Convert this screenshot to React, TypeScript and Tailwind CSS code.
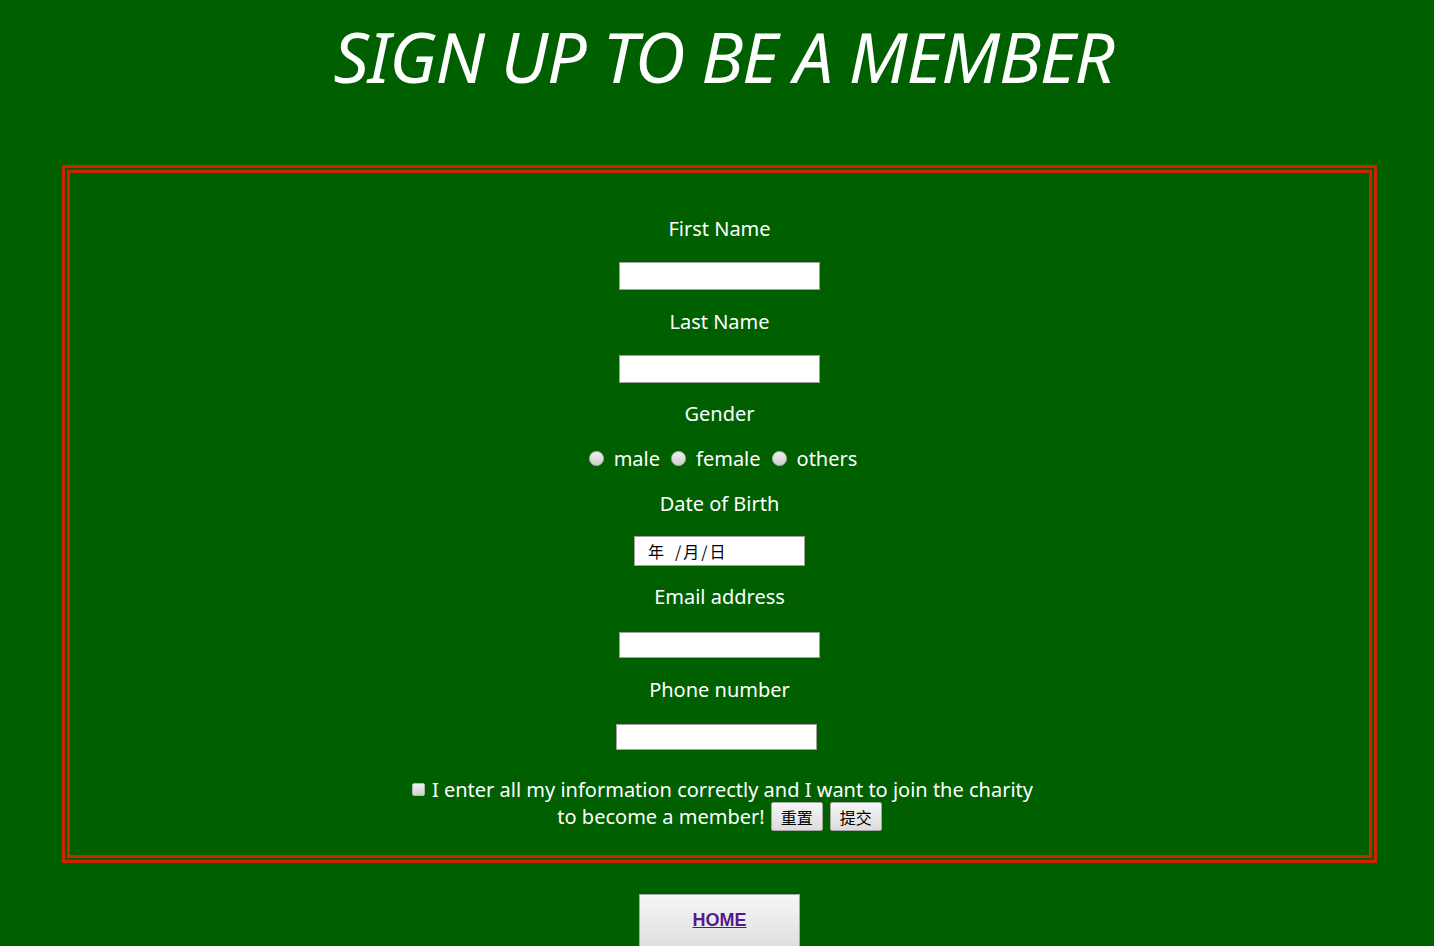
import React from "react";

function Radio({ label }: { label: string }) {
  return (
    <span className="flex items-center">
      <span className="inline-block h-[15px] w-[15px] rounded-full border border-[#bdbdbd] bg-gradient-to-b from-[#eeeeee] to-[#cfcfcf]" />
      <span className="ml-[10px] mr-[11px]">{label}</span>
    </span>
  );
}

function SmallButton({ text }: { text: string }) {
  return (
    <button
      type="button"
      className="flex h-[29px] w-[52px] items-center justify-center rounded-[2px] border border-[#a6a6a6] bg-gradient-to-b from-[#f6f6f6] to-[#dcdcdc] font-['Noto_Sans_CJK_SC',sans-serif] text-[16px] leading-none text-black"
    >
      {text}
    </button>
  );
}

export default function App() {
  return (
    <div className="min-h-screen bg-[#006000] pb-[40px] font-['Noto_Sans',sans-serif] text-white">
      <h1 className="pl-[13px] pt-[21px] text-center text-[70px] leading-[70px] font-normal italic tracking-[-1.2px]">
        SIGN UP TO BE A MEMBER
      </h1>

      <form className="ml-[62px] mt-[74px] flex w-[1315px] flex-col items-center border-[8px] border-double border-[#d02400] pb-[25px] pt-[42px] text-[20px] leading-[27px]">
        <label className="block h-[27px]">First Name</label>
        <input
          type="text"
          className="mt-[20px] h-[28px] w-[201px] border border-[#a0a0a0] bg-white outline-none"
        />

        <label className="mt-[18px] block h-[27px]">Last Name</label>
        <input
          type="text"
          className="mt-[20px] h-[28px] w-[201px] border border-[#a0a0a0] bg-white outline-none"
        />

        <label className="mt-[17px] block h-[27px]">Gender</label>
        <div className="mt-[18px] flex h-[27px] items-center pl-[18px]">
          <Radio label="male" />
          <Radio label="female" />
          <Radio label="others" />
        </div>

        <label className="mt-[18px] block h-[27px]">Date of Birth</label>
        <div className="mt-[19px] flex h-[30px] w-[171px] items-center border border-[#a0a0a0] bg-white pb-[1px] pl-[13px] font-['Noto_Sans_CJK_SC',sans-serif] text-[16px] leading-none text-black">
          <span>年</span>
          <span className="ml-[11px] mr-[2px]">/</span>
          <span>月</span>
          <span className="mx-[2px]">/</span>
          <span>日</span>
        </div>

        <label className="mt-[17px] block h-[27px]">Email address</label>
        <input
          type="email"
          className="mt-[22px] h-[26px] w-[201px] border border-[#a0a0a0] bg-white outline-none"
        />

        <label className="mt-[18px] block h-[27px]">Phone number</label>
        <input
          type="tel"
          className="mr-[6px] mt-[21px] h-[26px] w-[201px] border border-[#a0a0a0] bg-white outline-none"
        />

        <div className="mt-[26px] flex h-[27px] items-center pl-[6px]">
          <span className="inline-block h-[13px] w-[13px] rounded-[2px] border border-[#b5b5b5] bg-gradient-to-b from-[#f0f0f0] to-[#d0d0d0]" />
          <span className="ml-[7px]">I enter all my information correctly and I want to join the charity</span>
        </div>
        <div className="flex h-[27px] items-center">
          <span>to become a member!</span>
          <span className="ml-[6px]">
            <SmallButton text="重置" />
          </span>
          <span className="ml-[7px]">
            <SmallButton text="提交" />
          </span>
        </div>
      </form>

      <div className="mt-[31px] flex justify-center pl-[5px]">
        <a
          href="#"
          className="block h-[60px] w-[161px] border border-[#a8a8a8] bg-gradient-to-b from-[#f6f6f6] to-[#dcdcdc] pt-[14px] text-center font-['Liberation_Sans',Arial,sans-serif] text-[18px] font-bold leading-[22px] text-[#551a8b] underline"
        >
          HOME
        </a>
      </div>
    </div>
  );
}
